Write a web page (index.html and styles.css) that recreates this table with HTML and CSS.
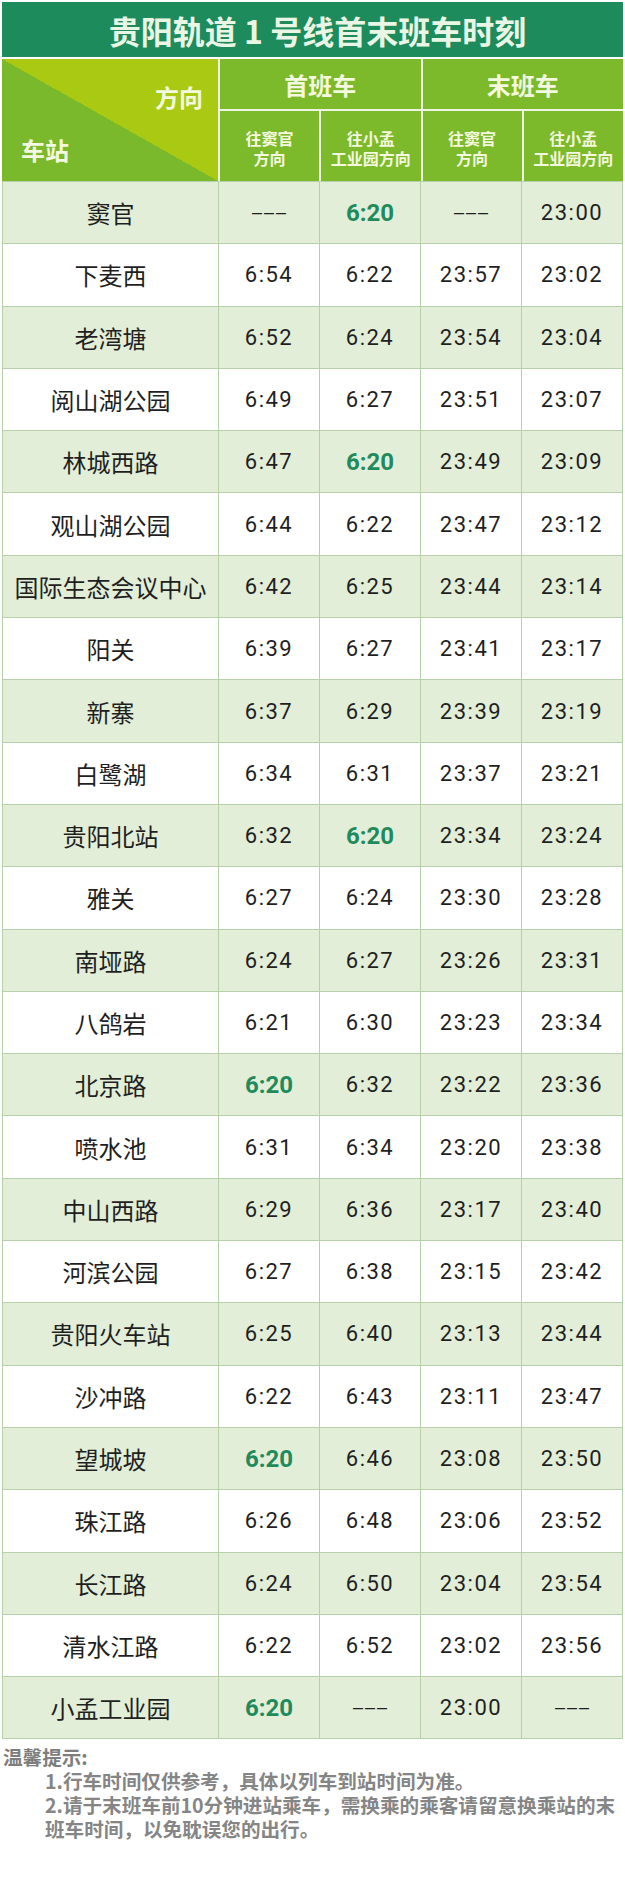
FILE: index.html
```html
<!DOCTYPE html>
<html lang="zh-CN">
<head>
<meta charset="utf-8">
<title>贵阳轨道 1 号线首末班车时刻</title>
<link rel="stylesheet" href="styles.css">
</head>
<body>
<div class="page">
  <div class="title">贵阳轨道 1 号线首末班车时刻</div>
  <div class="head">
    <div class="corner"><span class="dir">方向</span><span class="sta">车站</span></div>
    <div class="group">首班车</div>
    <div class="group">末班车</div>
    <div class="sub"><span>往窦官</span><span>方向</span></div>
    <div class="sub"><span>往小孟</span><span>工业园方向</span></div>
    <div class="sub"><span>往窦官</span><span>方向</span></div>
    <div class="sub"><span>往小孟</span><span>工业园方向</span></div>
  </div>
  <div class="tbody">
    <div class="row g"><div class="name">窦官</div><div class="t d">–––</div><div class="t hi">6:20</div><div class="t d">–––</div><div class="t">23:00</div></div>
    <div class="row"><div class="name">下麦西</div><div class="t">6:54</div><div class="t">6:22</div><div class="t">23:57</div><div class="t">23:02</div></div>
    <div class="row g"><div class="name">老湾塘</div><div class="t">6:52</div><div class="t">6:24</div><div class="t">23:54</div><div class="t">23:04</div></div>
    <div class="row"><div class="name">阅山湖公园</div><div class="t">6:49</div><div class="t">6:27</div><div class="t">23:51</div><div class="t">23:07</div></div>
    <div class="row g"><div class="name">林城西路</div><div class="t">6:47</div><div class="t hi">6:20</div><div class="t">23:49</div><div class="t">23:09</div></div>
    <div class="row"><div class="name">观山湖公园</div><div class="t">6:44</div><div class="t">6:22</div><div class="t">23:47</div><div class="t">23:12</div></div>
    <div class="row g"><div class="name">国际生态会议中心</div><div class="t">6:42</div><div class="t">6:25</div><div class="t">23:44</div><div class="t">23:14</div></div>
    <div class="row"><div class="name">阳关</div><div class="t">6:39</div><div class="t">6:27</div><div class="t">23:41</div><div class="t">23:17</div></div>
    <div class="row g"><div class="name">新寨</div><div class="t">6:37</div><div class="t">6:29</div><div class="t">23:39</div><div class="t">23:19</div></div>
    <div class="row"><div class="name">白鹭湖</div><div class="t">6:34</div><div class="t">6:31</div><div class="t">23:37</div><div class="t">23:21</div></div>
    <div class="row g"><div class="name">贵阳北站</div><div class="t">6:32</div><div class="t hi">6:20</div><div class="t">23:34</div><div class="t">23:24</div></div>
    <div class="row"><div class="name">雅关</div><div class="t">6:27</div><div class="t">6:24</div><div class="t">23:30</div><div class="t">23:28</div></div>
    <div class="row g"><div class="name">南垭路</div><div class="t">6:24</div><div class="t">6:27</div><div class="t">23:26</div><div class="t">23:31</div></div>
    <div class="row"><div class="name">八鸽岩</div><div class="t">6:21</div><div class="t">6:30</div><div class="t">23:23</div><div class="t">23:34</div></div>
    <div class="row g"><div class="name">北京路</div><div class="t hi">6:20</div><div class="t">6:32</div><div class="t">23:22</div><div class="t">23:36</div></div>
    <div class="row"><div class="name">喷水池</div><div class="t">6:31</div><div class="t">6:34</div><div class="t">23:20</div><div class="t">23:38</div></div>
    <div class="row g"><div class="name">中山西路</div><div class="t">6:29</div><div class="t">6:36</div><div class="t">23:17</div><div class="t">23:40</div></div>
    <div class="row"><div class="name">河滨公园</div><div class="t">6:27</div><div class="t">6:38</div><div class="t">23:15</div><div class="t">23:42</div></div>
    <div class="row g"><div class="name">贵阳火车站</div><div class="t">6:25</div><div class="t">6:40</div><div class="t">23:13</div><div class="t">23:44</div></div>
    <div class="row"><div class="name">沙冲路</div><div class="t">6:22</div><div class="t">6:43</div><div class="t">23:11</div><div class="t">23:47</div></div>
    <div class="row g"><div class="name">望城坡</div><div class="t hi">6:20</div><div class="t">6:46</div><div class="t">23:08</div><div class="t">23:50</div></div>
    <div class="row"><div class="name">珠江路</div><div class="t">6:26</div><div class="t">6:48</div><div class="t">23:06</div><div class="t">23:52</div></div>
    <div class="row g"><div class="name">长江路</div><div class="t">6:24</div><div class="t">6:50</div><div class="t">23:04</div><div class="t">23:54</div></div>
    <div class="row"><div class="name">清水江路</div><div class="t">6:22</div><div class="t">6:52</div><div class="t">23:02</div><div class="t">23:56</div></div>
    <div class="row g"><div class="name">小孟工业园</div><div class="t hi">6:20</div><div class="t d">–––</div><div class="t">23:00</div><div class="t d">–––</div></div>
  </div>
  <div class="notes">
    <div class="notes-title">温馨提示:</div>
    <div class="note">1.行车时间仅供参考，具体以列车到站时间为准。</div>
    <div class="note">2.请于末班车前10分钟进站乘车，需换乘的乘客请留意换乘站的末班车时间，以免耽误您的出行。</div>
  </div>
</div>
</body>
</html>
```

FILE: styles.css
```css
html, body {
  margin: 0;
  padding: 0;
  background: #ffffff;
}

body {
  font-family: "Noto Sans CJK SC", "Noto Sans", sans-serif;
  color: #1f1f1f;
}

.page {
  width: 621px;
  padding: 2px 2px 0 2px;
}

.title {
  height: 55px;
  background: #1d8b5c;
  color: #eaf6e5;
  font-size: 32px;
  font-weight: 700;
  display: flex;
  align-items: center;
  justify-content: center;
  padding-left: 10px;
  box-sizing: border-box;
  margin-bottom: 2px;
}

.head {
  display: grid;
  grid-template-columns: 216px 1fr 1fr 1fr 1fr;
  grid-template-rows: 50px 70px;
  gap: 2px;
  background: #eef5e2;
  color: #f4f8de;
  font-weight: 700;
}

.corner {
  grid-row: 1 / span 2;
  background: linear-gradient(to top right, #7ab92b 50%, #a9c912 50%);
  display: flex;
  flex-direction: column;
  justify-content: space-between;
  padding: 24px 15px 16px 19px;
  font-size: 24px;
  line-height: 1.2;
}

.dir {
  align-self: flex-end;
}

.sta {
  align-self: flex-start;
}

.group {
  grid-column: span 2;
  background: #7cba2c;
  font-size: 24px;
  display: flex;
  align-items: center;
  justify-content: center;
}

.sub {
  background: #7cba2c;
  font-size: 16px;
  line-height: 20px;
  text-align: center;
  display: flex;
  flex-direction: column;
  align-items: center;
  justify-content: center;
  padding-top: 3px;
  box-sizing: border-box;
}

.tbody {
  display: flex;
  flex-direction: column;
  gap: 1px;
  background: #b6d1aa;
  border: 1px solid #b6d1aa;
}

.row {
  display: grid;
  grid-template-columns: 215px 1fr 1fr 1fr 1fr;
  column-gap: 1px;
  height: 61.3px;
}

.row > div {
  background: #ffffff;
  display: flex;
  align-items: center;
  justify-content: center;
}

.row.g > div {
  background: #e2eed8;
}

.name {
  font-size: 24px;
  color: #1f1f1f;
}

.t {
  font-family: Roboto, "Liberation Sans", sans-serif;
  font-size: 22px;
  letter-spacing: 1.5px;
  color: #1f1f1f;
}

.t.d {
  font-family: "Liberation Sans", sans-serif;
  font-size: 18px;
  letter-spacing: 2px;
  padding-left: 2px;
}

.t.hi {
  font-size: 24px;
  font-weight: 700;
  letter-spacing: 0;
  color: #1f8a5c;
}

.notes {
  margin-top: 6px;
  margin-right: -2px;
  font-size: 19.6px;
  line-height: 24px;
  font-weight: 700;
  color: #858585;
}

.notes-title {
  padding-left: 1px;
  color: #7d7d7d;
}

.note {
  padding-left: 43px;
}
```
